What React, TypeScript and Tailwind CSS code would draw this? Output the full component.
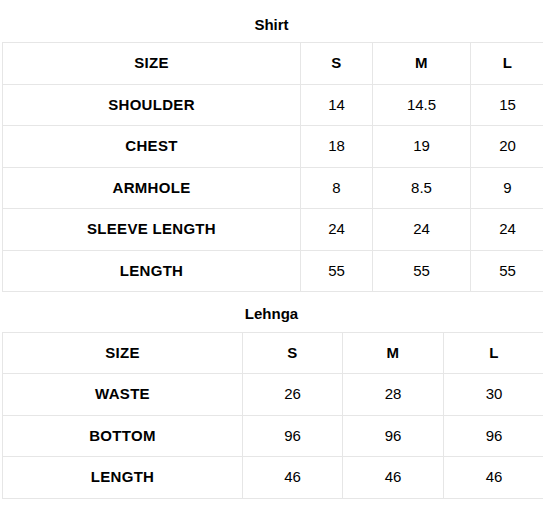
import React from "react";

type Row = { h: string; cells: string[] };
type T = { title: string; titleH: string; cols: string[]; rows: Row[] };

const tables: T[] = [
  {
    title: "Shirt",
    titleH: "h-[42px] pb-[9px]",
    cols: ["w-[298px]", "w-[72px]", "w-[98px]", "w-[74px]"],
    rows: [
      { h: "h-[42px]", cells: ["SIZE", "S", "M", "L"] },
      { h: "h-[41px]", cells: ["SHOULDER", "14", "14.5", "15"] },
      { h: "h-[42px]", cells: ["CHEST", "18", "19", "20"] },
      { h: "h-[41px]", cells: ["ARMHOLE", "8", "8.5", "9"] },
      { h: "h-[42px]", cells: ["SLEEVE LENGTH", "24", "24", "24"] },
      { h: "h-[41px]", cells: ["LENGTH", "55", "55", "55"] },
    ],
  },
  {
    title: "Lehnga",
    titleH: "h-[40px] pb-[10px]",
    cols: ["w-[240px]", "w-[100px]", "w-[101px]", "w-[101px]"],
    rows: [
      { h: "h-[41px]", cells: ["SIZE", "S", "M", "L"] },
      { h: "h-[42px]", cells: ["WASTE", "26", "28", "30"] },
      { h: "h-[41px]", cells: ["BOTTOM", "96", "96", "96"] },
      { h: "h-[42px]", cells: ["LENGTH", "46", "46", "46"] },
    ],
  },
];

function SizeTable({ t }: { t: T }) {
  return (
    <section>
      <h2 className={`${t.titleH} flex items-end justify-center text-[15px] leading-[17px] font-bold text-black`}>
        {t.title}
      </h2>
      <table className="w-[542px] table-fixed border-collapse ml-[2px]">
        <colgroup>
          {t.cols.map((w, i) => (
            <col key={i} className={w} />
          ))}
        </colgroup>
        <tbody>
          {t.rows.map((r, ri) => (
            <tr key={ri} className={r.h}>
              {r.cells.map((c, ci) => (
                <td
                  key={ci}
                  className={`border border-[#e6e6e6] px-0 pt-0 pb-[2px] text-center align-middle text-[15px] leading-[17px] text-black ${
                    ci === 0 || ri === 0 ? "font-bold tracking-[0.3px]" : "font-normal"
                  }`}
                >
                  {c}
                </td>
              ))}
            </tr>
          ))}
        </tbody>
      </table>
    </section>
  );
}

export default function App() {
  return (
    <div className="w-[543px] h-[507px] overflow-hidden bg-white font-['Liberation_Sans',Arial,sans-serif]">
      {tables.map((t, i) => (
        <SizeTable key={i} t={t} />
      ))}
    </div>
  );
}
